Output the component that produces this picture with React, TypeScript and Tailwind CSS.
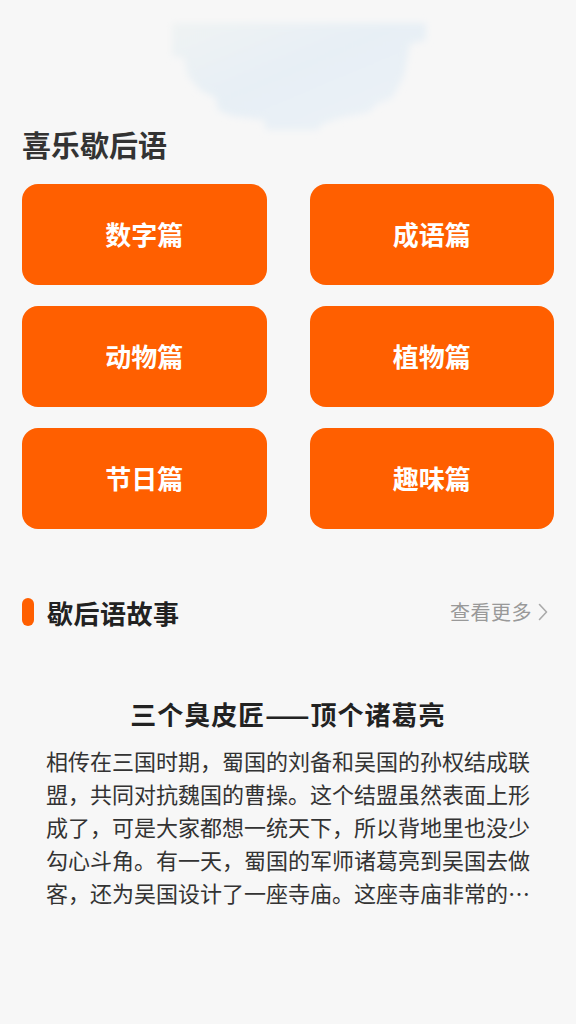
import React from "react";

const cats = ["数字篇", "成语篇", "动物篇", "植物篇", "节日篇", "趣味篇"];

export default function App() {
  return (
    <div
      className="min-h-screen w-full bg-[#f7f7f7] text-[#333]"
      style={{ fontFamily: '"Noto Sans CJK SC", "Noto Sans", sans-serif' }}
    >
      <div className="relative h-[124px] w-full">
        <svg className="absolute left-0 top-0" width="576" height="140" viewBox="0 0 576 140">
          <defs>
            <filter id="b" x="-20%" y="-20%" width="140%" height="140%">
              <feGaussianBlur stdDeviation="3.5" />
            </filter>
            <linearGradient id="g" x1="0" y1="0" x2="1" y2="1">
              <stop offset="0" stopColor="#eff3f3" />
              <stop offset="0.45" stopColor="#e7eff5" />
              <stop offset="1" stopColor="#ecf2f7" />
            </linearGradient>
          </defs>
          <path
            d="M172 23 L426 23 L426 40 L410 44 L404 76 L392 98 L376 104 L370 112 L340 118 L322 124 L318 130 L266 130 L264 120 L232 116 L218 110 L216 98 L200 90 L188 76 L184 58 L172 56 Z"
            fill="url(#g)"
            filter="url(#b)"
          />
        </svg>
      </div>
      <div className="relative h-[40px] px-[22px] text-[29px] font-bold leading-[40px] text-[#333]">
        喜乐歇后语
      </div>
      <div className="mt-[20px] grid grid-cols-2 gap-x-[43px] gap-y-[21px] px-[22px]">
        {cats.map((c) => (
          <div
            key={c}
            className="flex h-[101px] items-center justify-center rounded-[16px] bg-[#ff5f00] pb-[3px] text-[26px] font-bold text-white"
          >
            {c}
          </div>
        ))}
      </div>
      <div className="mt-[63px] flex h-[40px] items-center justify-between pl-[22px] pr-[28px]">
        <div className="flex items-center">
          <div className="h-[28px] w-[12px] rounded-full bg-[#ff5f00]" />
          <div className="ml-[13px] text-[26px] font-bold tracking-[0.5px] text-[#222]">歇后语故事</div>
        </div>
        <div className="flex items-center text-[20px] tracking-[0.5px] text-[#999]">
          <span>查看更多</span>
          <svg className="ml-[6px]" width="10" height="18" viewBox="0 0 10 18">
            <path d="M1.5 1.5 L8.5 9 L1.5 16.5" fill="none" stroke="#aaa" strokeWidth="1.6" strokeLinecap="round" strokeLinejoin="round" />
          </svg>
        </div>
      </div>
      <div className="mt-[62px] h-[40px] text-center text-[26px] font-bold leading-[40px] tracking-[1px] text-[#222]">
        三个臭皮匠——顶个诸葛亮
      </div>
      <div className="mt-[10px] px-[46px]">
        <p className="h-[165px] overflow-hidden text-[22px] leading-[33px] text-[#333]">
          相传在三国时期，蜀国的刘备和吴国的孙权结成联盟，共同对抗魏国的曹操。这个结盟虽然表面上形成了，可是大家都想一统天下，所以背地里也没少勾心斗角。有一天，蜀国的军师诸葛亮到吴国去做客，还为吴国设计了一座寺庙。这座寺庙非常的…
        </p>
      </div>
    </div>
  );
}
